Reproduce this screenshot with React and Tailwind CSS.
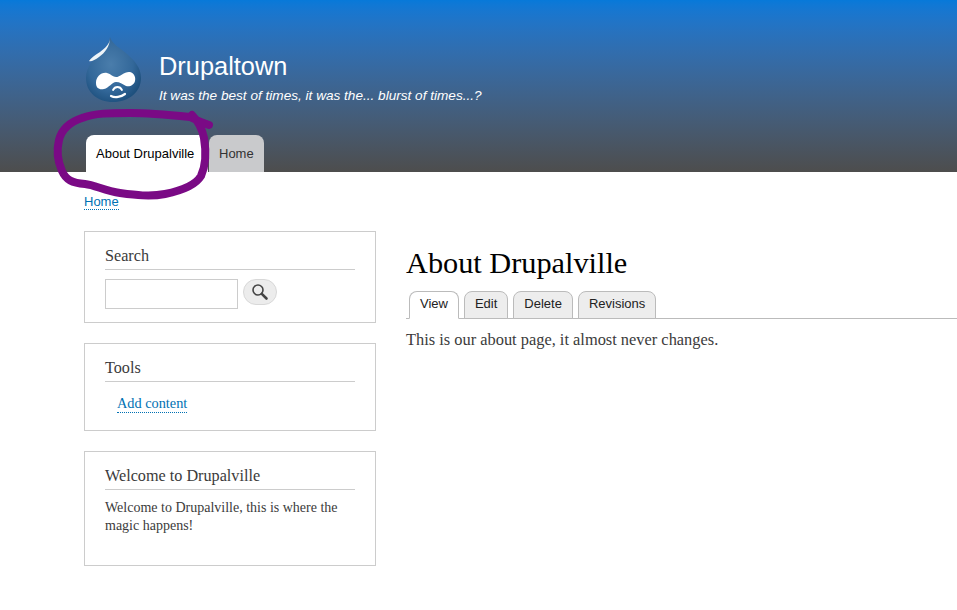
const serif = "font-['Liberation_Serif',serif]";

const Logo = () => (
    <svg width="58" height="66" viewBox="0 0 58 66" className="shrink-0">
        <defs>
            <radialGradient id="dropFill" cx="0.45" cy="0.42" r="0.62">
                <stop offset="0" stopColor="#4a7dab" />
                <stop offset="0.65" stopColor="#33689a" />
                <stop offset="1" stopColor="#1d4f7c" />
            </radialGradient>
        </defs>
        {/* drop */}
        <path d="M26 0 C28 7 36 11 43 17 C51 24 57 31 57 41 C57 55 45 65 29 65 C13 65 2 55 2 41 C2 30 9 23 15 18 C20 13 25 8 26 0 Z" fill="url(#dropFill)" />
        {/* highlight */}
        <path d="M26 1 C26 7 21 11 16 15 C11 18 7 21 5 24 C7 25 11 23 15 20 C21 16 26 9 26 1 Z" fill="#eef4f8" />
        {/* face */}
        <path d="M12 46 C12 40 17 35 23 36 C27 37 29 40 32 40 C36 40 41 34 46 35 C50 36 52 40 51 44 C50 48 46 50 42 49 C38 47 36 45 32 45 C28 45 25 51 20 52 C15 53 12 51 12 46 Z" fill="#fff" />
        <path d="M27 59 C31 61 37 60 41 57" stroke="#fff" strokeWidth="2.2" fill="none" strokeLinecap="round" />
        <path d="M29 53 C31 49 36 49 38 53" stroke="#fff" strokeWidth="1.8" fill="none" strokeLinecap="round" />
    </svg>
);

const Magnifier = () => (
    <svg width="18" height="18" viewBox="0 0 18 18" fill="none">
        <circle cx="7" cy="7" r="5" stroke="#444" strokeWidth="1.6" />
        <path d="M10.8 10.8 L15.5 15.5" stroke="#444" strokeWidth="2.6" strokeLinecap="round" />
    </svg>
);

const Block = ({ title, className, children }) => (
    <div className={`border border-[#ccc] px-5 ${className}`}>
        <h2 className={`${serif} text-[16.2px] leading-[20px] text-[#3b3b3b] border-b border-[#ccc] pt-[14px] pb-[3px]`}>{title}</h2>
        {children}
    </div>
);

const Tab = ({ label, active }) => (
    <a className={`block h-[28px] rounded-t-lg border border-[#bbb] px-[10px] pt-[2px] text-[13px] leading-[20px] text-[#222] ${active ? 'bg-white border-b-white' : 'bg-[#ededed]'}`}>{label}</a>
);

export default function App() {
    return (
        <div className="relative h-[610px] w-[957px] overflow-hidden bg-white font-['Liberation_Sans',sans-serif]">
            {/* Header */}
            <header className="h-[172px] bg-gradient-to-b from-[#0779d9] to-[#4d4d4d] pl-[84px]">
                <div className="flex h-[135px] pt-[37px]">
                    <Logo />
                    <div className="ml-[17px] pt-[13px]">
                        <div className="text-[25.4px] leading-[32px] text-white">Drupaltown</div>
                        <div className="mt-[5px] text-[13.6px] italic leading-[18px] text-white">It was the best of times, it was the... blurst of times...?</div>
                    </div>
                </div>
                <nav className="ml-[2px] flex h-[37px] gap-px text-[13px] leading-[37px]">
                    <a className="w-[122px] rounded-t-lg bg-white pl-[10px] text-black">About Drupalville</a>
                    <a className="w-[55px] rounded-t-lg bg-[#c9cacc] pl-[10px] text-[#333]">Home</a>
                </nav>
            </header>

            {/* Breadcrumb */}
            <div className="ml-[84px] mt-[21px] h-[38px] text-[13px] leading-[17px]">
                <a className="inline-block border-b border-dotted border-[#0071b3] leading-[15px] text-[#0071b3]">Home</a>
            </div>

            <div className="flex pl-[84px]">
                {/* Sidebar */}
                <aside className="flex w-[292px] shrink-0 flex-col gap-5">
                    <Block title="Search" className="h-[92px]">
                        <div className="mt-[9px] flex items-start">
                            <div className="h-[30px] w-[133px] border border-[#ccc] bg-white" />
                            <div className="ml-[5px] flex h-[26px] w-[34px] items-center justify-center rounded-full border border-[#d8d8d8] bg-[#ececec]">
                                <Magnifier />
                            </div>
                        </div>
                    </Block>
                    <Block title="Tools" className="h-[88px]">
                        <div className={`${serif} mt-[12px] pl-3 text-[14.3px] leading-[18px]`}>
                            <a className="inline-block border-b border-dotted border-[#0071b3] text-[#0071b3]">Add content</a>
                        </div>
                    </Block>
                    <Block title="Welcome to Drupalville" className="h-[115px]">
                        <p className={`${serif} mt-[9px] text-[14px] leading-[18px] text-[#3b3b3b]`}>Welcome to Drupalville, this is where the magic happens!</p>
                    </Block>
                </aside>

                {/* Main content */}
                <main className="ml-[30px] flex-1 pt-[14px]">
                    <h1 className={`${serif} text-[30.3px] leading-[36px] text-black`}>About Drupalville</h1>
                    <div className="mt-[10px] flex h-[28px] gap-[5px] border-b border-[#bbb] pl-[3px]">
                        <Tab label="View" active />
                        <Tab label="Edit" />
                        <Tab label="Delete" />
                        <Tab label="Revisions" />
                    </div>
                    <p className={`${serif} mt-[11px] text-[16.4px] leading-[20px] text-[#3b3b3b]`}>This is our about page, it almost never changes.</p>
                </main>
            </div>

            {/* Marker annotation over the nav tab */}
            <svg className="absolute left-0 top-0" width="957" height="610" viewBox="0 0 957 610" fill="none">
                <path
                    d="M209 125 C203 123 198 121 190 117 C170 115 150 113 130 113 C110 113 95 113 82 118 C70 122 62 128 59 140 C56 152 58 162 62 171 C66 180 72 183 85 184 C95 185 105 191 120 193 C135 195 150 197 165 194 C180 191 195 186 201 176 C206 165 206 150 204 138 C202 128 199 122 192 115"
                    stroke="#7a0a85"
                    strokeWidth="8"
                    strokeLinecap="round"
                    strokeLinejoin="round"
                />
            </svg>
        </div>
    );
}
